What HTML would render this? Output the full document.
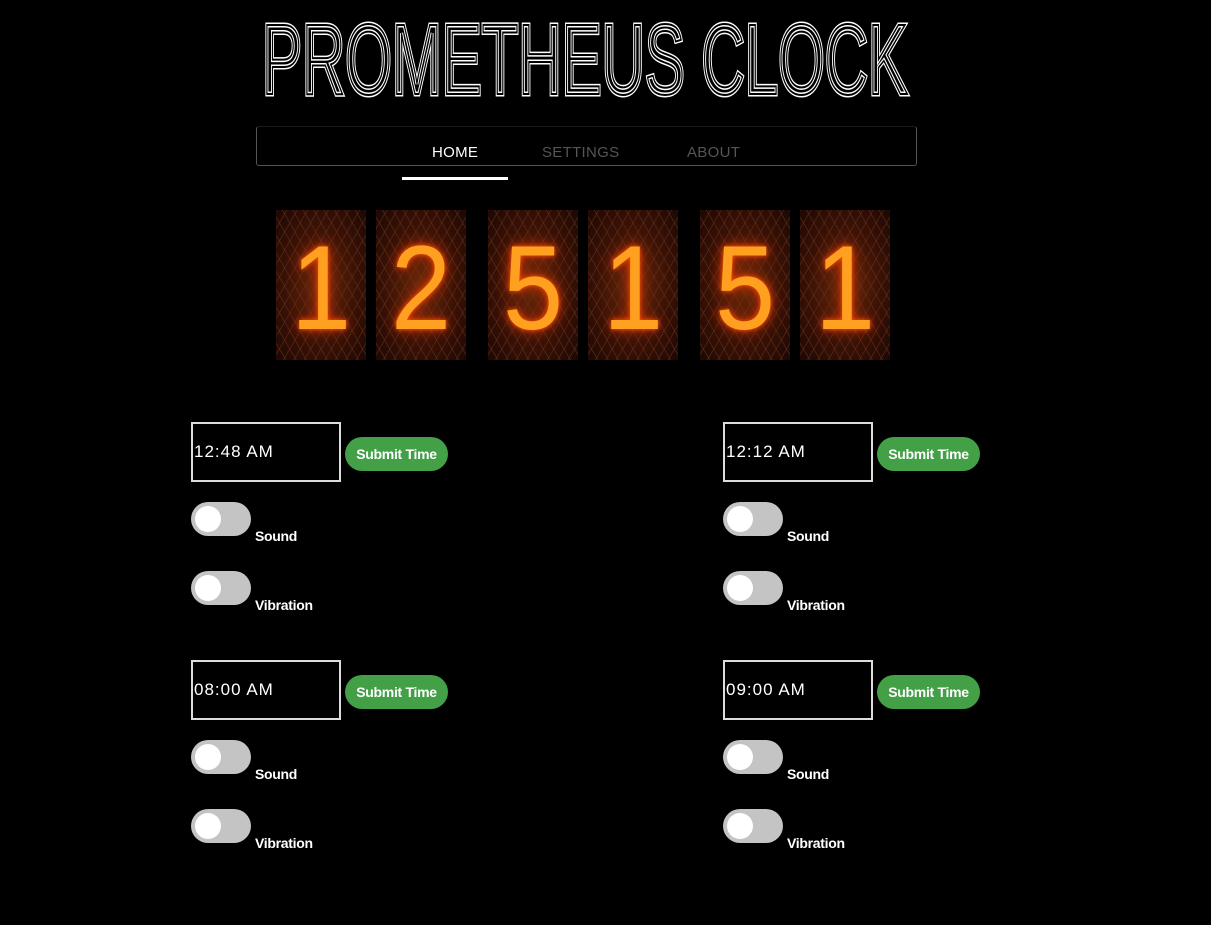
<!DOCTYPE html>
<html><head><style>
body{margin:0;background:#000;width:1211px;height:925px;overflow:hidden;position:relative;font-family:"Liberation Sans",sans-serif}
.a{position:absolute}
.nav{left:256px;top:126px;width:661px;height:40px;border:1px solid #555;border-top:1px solid #1a1a1a;border-radius:3px;box-sizing:border-box}
.nl{font-size:15px;top:144px;letter-spacing:.3px}
.tube{position:absolute;top:210px;width:90px;height:150px;background:radial-gradient(ellipse at 50% 50%,#6a2808 0%,#3a1206 55%,#1c0804 100%);overflow:hidden}
.tube span{position:absolute;left:0;width:90px;text-align:center;top:8px;font-size:120px;line-height:140px;color:#ffa020;text-shadow:0 0 5px #ff5a00,0 0 14px #e03000;font-family:"Liberation Sans",sans-serif;transform:scaleX(.9)}
.tube:before{content:"";position:absolute;inset:0;background:repeating-linear-gradient(60deg,transparent 0 8px,rgba(110,50,25,.5) 8px 9px),repeating-linear-gradient(-60deg,transparent 0 8px,rgba(110,50,25,.5) 8px 9px)}
.inp{width:150px;height:60px;border:2px solid #ddd;box-sizing:border-box;color:#fff;font-size:17px;line-height:56px;padding-left:1px;letter-spacing:1px}
.btn{width:103px;height:34px;background:#43a047;border-radius:17px;color:#fff;font-weight:bold;font-size:14px;line-height:34px;text-align:center;letter-spacing:-.3px}
.tg{width:60px;height:34px;background:#c4c4c4;border-radius:17px}
.tg:after{content:"";position:absolute;left:4px;top:4px;width:26px;height:26px;border-radius:50%;background:#fff}
.lb{color:#fff;font-weight:bold;font-size:14px;letter-spacing:-.3px}
</style></head><body>
<svg class="a" style="left:0;top:0" width="1211" height="110">
<text x="262" y="94" textLength="646" lengthAdjust="spacingAndGlyphs" font-family="Liberation Sans" font-size="100" fill="none" stroke="#fff" stroke-width="5">PROMETHEUS CLOCK</text>
<text x="262" y="94" textLength="646" lengthAdjust="spacingAndGlyphs" font-family="Liberation Sans" font-size="100" fill="none" stroke="#000" stroke-width="2">PROMETHEUS CLOCK</text>
</svg>
<div class="a nav"></div>
<div class="a nl" style="left:432px;color:#fff">HOME</div>
<div class="a nl" style="left:542px;color:#555">SETTINGS</div>
<div class="a nl" style="left:687px;color:#555">ABOUT</div>
<div class="a" style="left:402px;top:177px;width:106px;height:3px;background:#fff"></div>
<div class="tube" style="left:276px"><span>1</span></div>
<div class="tube" style="left:376px"><span>2</span></div>
<div class="tube" style="left:488px"><span>5</span></div>
<div class="tube" style="left:588px"><span>1</span></div>
<div class="tube" style="left:700px"><span>5</span></div>
<div class="tube" style="left:800px"><span>1</span></div>

<div class="a" style="left:191px;top:422px">
<div class="a inp" style="left:0;top:0">12:48 AM</div><div class="a btn" style="left:154px;top:15px">Submit Time</div>
<div class="a tg" style="left:0;top:80px"></div><div class="a lb" style="left:64px;top:106px">Sound</div>
<div class="a tg" style="left:0;top:149px"></div><div class="a lb" style="left:64px;top:175px">Vibration</div></div>
<div class="a" style="left:723px;top:422px">
<div class="a inp" style="left:0;top:0">12:12 AM</div><div class="a btn" style="left:154px;top:15px">Submit Time</div>
<div class="a tg" style="left:0;top:80px"></div><div class="a lb" style="left:64px;top:106px">Sound</div>
<div class="a tg" style="left:0;top:149px"></div><div class="a lb" style="left:64px;top:175px">Vibration</div></div>
<div class="a" style="left:191px;top:660px">
<div class="a inp" style="left:0;top:0">08:00 AM</div><div class="a btn" style="left:154px;top:15px">Submit Time</div>
<div class="a tg" style="left:0;top:80px"></div><div class="a lb" style="left:64px;top:106px">Sound</div>
<div class="a tg" style="left:0;top:149px"></div><div class="a lb" style="left:64px;top:175px">Vibration</div></div>
<div class="a" style="left:723px;top:660px">
<div class="a inp" style="left:0;top:0">09:00 AM</div><div class="a btn" style="left:154px;top:15px">Submit Time</div>
<div class="a tg" style="left:0;top:80px"></div><div class="a lb" style="left:64px;top:106px">Sound</div>
<div class="a tg" style="left:0;top:149px"></div><div class="a lb" style="left:64px;top:175px">Vibration</div></div>
</body></html>
